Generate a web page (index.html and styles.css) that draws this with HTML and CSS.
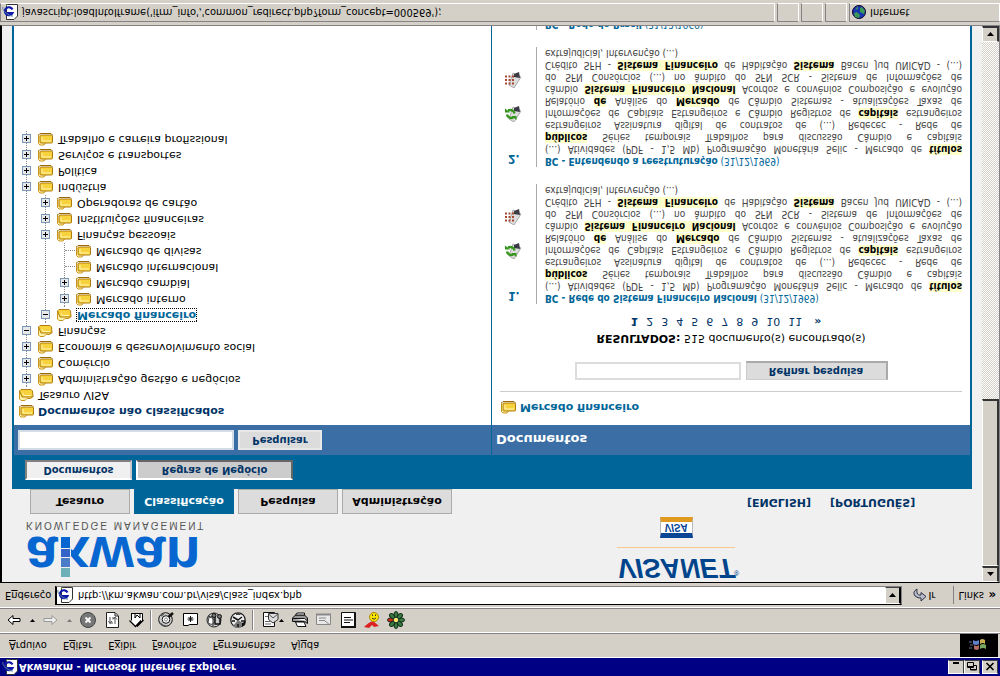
FILE: index.html
```html
<!DOCTYPE html>
<html lang="pt-BR">
<head>
<meta charset="utf-8">
<title>Akwankm - Microsoft Internet Explorer</title>
<link rel="stylesheet" href="styles.css">
</head>
<body>
<svg class="defs" aria-hidden="true">
  <symbol id="folder" viewBox="0 0 16 14">
    <path d="M1.500 11.500V2.500L3 1H7L8.500 3" fill="#fff3a8" stroke="#c9961c"/>
    <path d="M1.500 11L3 12.500H14L15.500 11" fill="none" stroke="#9a6a08"/>
    <rect x="3" y="3" width="12.500" height="8" rx="1" fill="#f7d23c" stroke="#b07c10"/>
    <path d="M5 9V5H14" fill="none" stroke="#fff6b4"/>
  </symbol>
  <symbol id="folder-open" viewBox="0 0 16 14">
    <path d="M1.500 11V3L3 1.500H7L9 3.500H13L14 5" fill="#fff3a8" stroke="#c9961c"/>
    <path d="M1.500 11L4 5H15L14.500 11L13 12.500H3z" fill="#f7d23c" stroke="#b07c10"/>
    <path d="M5 9L6 6.500H13" fill="none" stroke="#fff6b4"/>
  </symbol>
  <symbol id="ie" viewBox="0 0 16 16">
    <path d="M4.500.5H12l3.500 3.500v11.500h-11z" fill="#fff" stroke="#333"/>
    <path d="M4 14l1.500 1.500" stroke="#579028"/>
    <path d="M10.500 10.500A4 4 0 1 1 10.500 7H3" fill="none" stroke="#1018a8" stroke-width="2.200"/>
    <path d="M1 13C-1 10 8 3 11 4" fill="none" stroke="#5580a0"/>
  </symbol>
  <symbol id="down" viewBox="0 0 7 4"><path d="M0 0H7L3.500 4z" fill="#000"/></symbol>
  <symbol id="up" viewBox="0 0 7 4"><path d="M0 4H7L3.500 0z" fill="#000"/></symbol>
  <symbol id="refresh-doc" viewBox="0 0 18 16">
    <path d="M5 3L10 0L17 11L9 15z" fill="#ddd" stroke="#aaa"/>
    <path d="M10 11L16 10L15 16L10 14z" fill="#3a3a44"/>
    <path d="M3 7.500A4 4 0 0 1 9.500 5M10.500 8.500a4 4 0 0 1-6.500 2.500" fill="none" stroke="#35951c" stroke-width="2.400"/>
    <path d="M7.500 6h5V2zM6 9.500H1v4z" fill="#35951c"/>
  </symbol>
  <symbol id="grid-doc" viewBox="0 0 18 16">
    <path d="M5 3L10 0L17 11L9 15z" fill="#ddd" stroke="#aaa"/>
    <path d="M10 11L16 10L15 16L10 14z" fill="#3a3a44"/>
    <path d="M1 4.500H10M1 8H10M1 11.500H10" stroke="#a84630" stroke-width="2" stroke-dasharray="2 1.500"/>
  </symbol>
</svg>
<div class="screen">
  <header class="titlebar">
    <svg class="ic16"><use href="#ie"/></svg>
    <span class="grow">Akwankm - Microsoft Internet Explorer</span>
    <button class="win" aria-label="Minimizar"><svg viewBox="0 0 10 9"><path d="M2 8H8" stroke="#000" stroke-width="2"/></svg></button>
    <button class="win" aria-label="Restaurar"><svg viewBox="0 0 10 9"><path d="M3.500 3V1H9.500V5.500H7M3 1.500H9.500M.5 3.500H6.500V8.500H.5zM.5 4.500H6.500" fill="none" stroke="#000"/></svg></button>
    <button class="win close" aria-label="Fechar"><svg viewBox="0 0 10 9"><path d="M1.500 1L8.500 8M8.500 1L1.500 8" stroke="#000" stroke-width="1.600"/></svg></button>
  </header>

  <div class="menurow">
    <nav class="menu">
      <button><u>A</u>rquivo</button><button>E<u>d</u>itar</button><button>E<u>x</u>ibir</button><button><u>F</u>avoritos</button><button>F<u>e</u>rramentas</button><button>Aj<u>u</u>da</button>
    </nav>
    <div class="throbber"><svg viewBox="0 0 20 18"><path d="M5 5q3-2 5 0v4q-3-2-5 0z" fill="#b06a62"/><path d="M11 5q3 2 6 0v4q-3 2-6 0z" fill="#7aa860"/><path d="M4 10q3-2 6 0v4q-3-2-6 0z" fill="#5f7fc8"/><path d="M11 10q3 2 5 0v4q-3 2-5 0z" fill="#c8ae50"/><path d="M0 6h3M1 9h3M0 12h3" stroke="#68708a"/></svg></div>
  </div>

  <div class="toolbar">
    <button class="tb w24" aria-label="Voltar"><svg viewBox="0 0 18 18"><path d="M3 9L8 4.500V7.500H15V10.500H8V13.500z" fill="#fff" stroke="#000"/></svg></button>
    <button class="tb w12" aria-label="Histórico de voltar"><svg class="caret"><use href="#down"/></svg></button>
    <button class="tb w24" aria-label="Avançar"><svg viewBox="0 0 18 18"><path d="M16 9L11 4.500V7.500H3V10.500H11V13.500z" fill="#eee" stroke="#999"/></svg></button>
    <button class="tb w14" aria-label="Histórico de avançar"><svg class="caret dim"><use href="#down"/></svg></button>
    <button class="tb w24" aria-label="Parar"><svg viewBox="0 0 18 18"><circle cx="9" cy="9" r="7.500" fill="#777" stroke="#444"/><path d="M6.500 6.500l5 5M11.500 6.500l-5 5" stroke="#fff" stroke-width="1.800"/></svg></button>
    <button class="tb w24" aria-label="Atualizar"><svg viewBox="0 0 18 18"><path d="M3.500 1.500H15.500V13L12 16.500H3.500z" fill="#fff" stroke="#222"/><path d="M15 13H12V16" fill="none" stroke="#222"/><path d="M7 12V6H10M5.500 8L7 5.500 9 8M12 5V11H9M10 9.500l2 2.500 2-2.500" fill="none" stroke="#555"/></svg></button>
    <button class="tb w24" aria-label="Página inicial"><svg viewBox="0 0 18 18"><path d="M4.500 8V15.500H15.500V8" fill="#fff" stroke="#000"/><path d="M2.500 8.500L8.500 2.500L14 8.500M10 2.500L16.500 9" fill="#fff" stroke="#000" stroke-width="1.300"/><path d="M4 15.500H13V11L10 14L8 11V15" fill="#fff" stroke="#000"/></svg></button>
    <span class="sep"></span>
    <button class="tb w24" aria-label="Pesquisar"><svg viewBox="0 0 18 18"><circle cx="8.500" cy="9.500" r="6.800" fill="#ccc" stroke="#111"/><path d="M3 6q3-3 6-3M4 13l3 2M12 15l2-2" fill="none" stroke="#555" stroke-width="1.500"/><circle cx="9" cy="9.500" r="3.800" fill="#fff" stroke="#111"/><circle cx="9" cy="9.500" r="1.500" fill="none" stroke="#888"/><path d="M11.500 12L16 16" fill="none" stroke="#111" stroke-width="2.500"/></svg></button>
    <button class="tb w24" aria-label="Favoritos"><svg viewBox="0 0 18 18"><path d="M2.500 3.500H7L8.500 4.500H16.500V15.500H2.500z" fill="#fff" stroke="#000"/><path d="M9.500 7v6M6.500 10h6M7.500 8l4 4M11.500 8l-4 4" stroke="#111"/></svg></button>
    <button class="tb w24" aria-label="Mídia"><svg viewBox="0 0 18 18"><circle cx="9" cy="9" r="7" fill="#ccc" stroke="#222"/><path d="M3 6q5-3 6 1t-5 5z" fill="#fff" stroke="#444"/><path d="M3 13q3-2 5 0M8 3v10" fill="none" stroke="#333"/><path d="M10 13V5H15V12" fill="none" stroke="#111" stroke-width="1.500"/><circle cx="9" cy="13.500" r="2" fill="#777" stroke="#111"/><circle cx="14.500" cy="12.500" r="2" fill="#777" stroke="#111"/></svg></button>
    <button class="tb w24" aria-label="Histórico"><svg viewBox="0 0 18 18"><circle cx="9" cy="9" r="7.200" fill="#eee" stroke="#222" stroke-width="1.300"/><path d="M9 9L4 3A7 7 0 0 1 15 5z" fill="#777"/><path d="M9 9L4 12M9 9L13 12M3 8h3M9 2v3M12 8h4" fill="none" stroke="#111" stroke-width="1.500"/><path d="M7 14L12 14L10 16H7z" fill="#444"/><path d="M13 2v4l4 2-1-4z" fill="#111"/></svg></button>
    <span class="sep"></span>
    <button class="tb w30" aria-label="Correio"><svg viewBox="0 0 18 18"><path d="M2.500 2.500H13.500V16.500H2.500z" fill="#fff" stroke="#111"/><path d="M4 5h6M4 7.500h5M4 12.500h4" stroke="#666"/><path d="M7.500 9.500L12 6L17 9.500V15.500H7.500z" fill="#ddd" stroke="#333"/><path d="M7.500 15L12 11L17 15" fill="none" stroke="#555"/></svg><svg class="caret"><use href="#down"/></svg></button>
    <button class="tb w24" aria-label="Imprimir"><svg viewBox="0 0 18 18"><path d="M6.500 2.500H15L13 7H4.500z" fill="#fff" stroke="#111"/><path d="M1.500 7.500H13.500L16.500 5.500V11L13.500 14H4.500L1.500 11z" fill="#999" stroke="#111"/><path d="M1.500 10.500H13.500L16.500 8M4.500 14L13.500 14V16H6z" fill="#fff" stroke="#111"/></svg></button>
    <button class="tb w24" aria-label="Editar"><svg viewBox="0 0 18 18"><path d="M1.500 4.500H15.500V14.500H1.500z" fill="#e8e8e8" stroke="#888"/><path d="M1 14.500H16" stroke="#888" stroke-width="2"/><path d="M4 11h7M4 8.500h6M10 8l5-4" stroke="#888"/></svg></button>
    <button class="tb w24" aria-label="Discutir"><svg viewBox="0 0 18 18"><path d="M2.500 1.500H16.500V16.500H2.500z" fill="#fff" stroke="#111"/><path d="M2 2H17M16 2V16" stroke="#111" stroke-width="2"/><path d="M5 6.500h6M5 9h9M5 11.500h7" stroke="#111"/></svg></button>
    <button class="tb w24" aria-label="Messenger"><svg viewBox="0 0 18 18"><path d="M1 2q5 5 9 6l6-5-5-1-2 2-3-3z" fill="#d22"/><circle cx="11" cy="12" r="4.500" fill="#ffe600" stroke="#a80"/><path d="M9 11q2-2.500 4 0M9.500 13v1.500M12.500 13v1.500" fill="none" stroke="#333"/></svg></button>
    <button class="tb w24" aria-label="ICQ"><svg viewBox="0 0 18 18"><g fill="#397a45" stroke="#122e18"><ellipse cx="9" cy="3.500" rx="2" ry="3"/><ellipse cx="9" cy="3.500" rx="2" ry="3" transform="rotate(45 9 9)"/><ellipse cx="9" cy="3.500" rx="2" ry="3" transform="rotate(90 9 9)"/><ellipse cx="9" cy="3.500" rx="2" ry="3" transform="rotate(135 9 9)"/><ellipse cx="9" cy="3.500" rx="2" ry="3" transform="rotate(180 9 9)"/><ellipse cx="9" cy="3.500" rx="2" ry="3" transform="rotate(225 9 9)"/><ellipse cx="9" cy="3.500" rx="2" ry="3" transform="rotate(270 9 9)" fill="#d42a1a"/><ellipse cx="9" cy="3.500" rx="2" ry="3" transform="rotate(315 9 9)"/></g><circle cx="9" cy="9" r="2" fill="#ffe95a"/></svg></button>
  </div>

  <div class="address">
    <label for="url">E<u>n</u>dereço</label>
    <div class="combo">
      <svg class="ic16"><use href="#ie"/></svg>
      <input id="url" type="text" value="http://km.akwan.com.br/visa/class_index.php">
      <button class="drop" aria-label="Mostrar endereços"><svg class="caret"><use href="#down"/></svg></button>
    </div>
    <button class="go"><svg viewBox="0 0 14 14"><path d="M4 13Q-1 10 2 6Q5 3.500 8 4V1L13 5.500L8 9.500V7Q3 6 4 13z" fill="#b4bccc" stroke="#334"/></svg>Ir</button>
    <span class="links">Links</span><span class="more">»</span>
  </div>

  <div class="viewport">
    <main class="page">
      <div class="top">
        <div class="brand">
          <div class="akwan">akwan
            <svg viewBox="0 0 11 43"><rect width="11" height="43" fill="#f0f0f0"/><rect x="1" y="3" width="9" height="9" fill="#6eb0b8"/><rect x="1" y="13" width="9" height="9" fill="#4a7cc8"/><rect x="1" y="23" width="9" height="8" fill="#3563c8"/><rect x="1" y="32" width="9" height="11" fill="#0866d0"/></svg>
          </div>
          <div class="km">KNOWLEDGE MANAGEMENT</div>
          <nav class="tabs"><a href="#">Tesauro</a><a href="#" class="on">Classificação</a><a href="#">Pesquisa</a><a href="#" class="wide">Administração</a></nav>
        </div>
        <div class="visanet">
          <div class="vn">VISANET<sup>®</sup></div>
          <div class="card">VISA</div>
        </div>
        <nav class="lang"><a href="#">[ENGLISH]</a><a href="#">[PORTUGUÊS]</a></nav>
      </div>

      <div class="frame">
        <div class="subtabs"><button class="s1">Documentos</button><button class="s2">Regras de Negócio</button></div>
        <div class="cols">
          <section class="left">
            <form class="band"><input type="text" aria-label="Pesquisar conceito"><button type="button">Pesquisar</button></form>
            <div class="treebox">
              <a class="row strong" href="#"><svg class="fo"><use href="#folder"/></svg>Documentos não classificados</a>
              <a class="row" href="#"><svg class="fo"><use href="#folder-open"/></svg>Tesauro VISA</a>
              <ul class="tree">
                <li><div class="row"><button class="tg plus" aria-label="Expandir"></button><svg class="fo"><use href="#folder"/></svg><a href="#">Administração gestão e negócios</a></div></li>
                <li><div class="row"><button class="tg plus" aria-label="Expandir"></button><svg class="fo"><use href="#folder"/></svg><a href="#">Comércio</a></div></li>
                <li><div class="row"><button class="tg plus" aria-label="Expandir"></button><svg class="fo"><use href="#folder"/></svg><a href="#">Economia e desenvolvimento social</a></div></li>
                <li><div class="row"><button class="tg" aria-label="Recolher"></button><svg class="fo"><use href="#folder-open"/></svg><a href="#">Finanças</a></div>
                  <ul>
                    <li><div class="row"><button class="tg" aria-label="Recolher"></button><svg class="fo"><use href="#folder-open"/></svg><a href="#" class="sel">Mercado financeiro</a></div>
                      <ul>
                        <li><div class="row"><button class="tg plus" aria-label="Expandir"></button><svg class="fo"><use href="#folder"/></svg><a href="#">Mercado interno</a></div></li>
                        <li><div class="row"><button class="tg plus" aria-label="Expandir"></button><svg class="fo"><use href="#folder"/></svg><a href="#">Mercado cambial</a></div></li>
                        <li><div class="row"><span class="leaf"></span><svg class="fo"><use href="#folder"/></svg><a href="#">Mercado internacional</a></div></li>
                        <li><div class="row"><span class="leaf"></span><svg class="fo"><use href="#folder"/></svg><a href="#">Mercado de divisas</a></div></li>
                      </ul></li>
                    <li><div class="row"><button class="tg plus" aria-label="Expandir"></button><svg class="fo"><use href="#folder"/></svg><a href="#">Finanças pessoais</a></div></li>
                    <li><div class="row"><button class="tg plus" aria-label="Expandir"></button><svg class="fo"><use href="#folder"/></svg><a href="#">Instituições financeiras</a></div></li>
                    <li><div class="row"><button class="tg plus" aria-label="Expandir"></button><svg class="fo"><use href="#folder"/></svg><a href="#">Operadoras de cartão</a></div></li>
                  </ul></li>
                <li><div class="row"><button class="tg plus" aria-label="Expandir"></button><svg class="fo"><use href="#folder"/></svg><a href="#">Indústria</a></div></li>
                <li><div class="row"><button class="tg plus" aria-label="Expandir"></button><svg class="fo"><use href="#folder"/></svg><a href="#">Política</a></div></li>
                <li><div class="row"><button class="tg plus" aria-label="Expandir"></button><svg class="fo"><use href="#folder"/></svg><a href="#">Serviços e transportes</a></div></li>
                <li><div class="row"><button class="tg plus" aria-label="Expandir"></button><svg class="fo"><use href="#folder"/></svg><a href="#">Trabalho e carreira profissional</a></div></li>
              </ul>
            </div>
          </section>

          <section class="right">
            <h2 class="band">Documentos</h2>
            <div class="docs">
              <h3><svg class="fo"><use href="#folder"/></svg>Mercado financeiro</h3>
              <form class="refine"><input type="text" aria-label="Refinar pesquisa"><button type="button">Refinar pesquisa</button></form>
              <p class="count"><b>RESULTADOS:</b> 515 documento(s) encontrado(s)</p>
              <nav class="pager"><b>1</b><a href="#">2</a><a href="#">3</a><a href="#">4</a><a href="#">5</a><a href="#">6</a><a href="#">7</a><a href="#">8</a><a href="#">9</a><a href="#">10</a><a href="#">11</a><a href="#" class="next">»</a></nav>

              <article class="hit">
                <div class="side"><span class="num">1.</span><svg><use href="#refresh-doc"/></svg><svg><use href="#grid-doc"/></svg></div>
                <div class="text">
                  <a href="#"><b>BC - Rede do Sistema Financeiro Nacional</b> (31/12/1969)</a>
                  <p class="just">(...) Atividades (PDF - 1,5 Mb) Programação Monetária Selic - Mercado de <mark>títulos</mark><br><mark>públicos</mark> Séries temporais Trabalhos para discussão Câmbio e capitais<br>estrangeiros Assinatura digital de contratos de (...) Redecec - Rede de<br>Informações de Capitais Estrangeiros e Câmbio Registros de <mark>capitais</mark> estrangeiros<br>Relatório <mark>de</mark> Análise do <mark>Mercado</mark> de Câmbio Sistemas - atualizações Taxas de<br>câmbio <mark>Sistema Financeiro Nacional</mark> Acordos e convênios Composição e evolução<br>do SFN Consórcios (...) no âmbito do SFN SCR - Sistema de Informações de<br>Crédito SFH - <mark>Sistema Financeiro</mark> de Habitação <mark>Sistema</mark> Bacen Jud UNICAD - (...)</p>
                  <p>extrajudicial, Intervenção (...)</p>
                </div>
              </article>
              <article class="hit">
                <div class="side"><span class="num">2.</span><svg><use href="#refresh-doc"/></svg><svg><use href="#grid-doc"/></svg></div>
                <div class="text">
                  <a href="#"><b>BC - Entendendo a reestruturação</b> (31/12/1969)</a>
                  <p class="just">(...) Atividades (PDF - 1,5 Mb) Programação Monetária Selic - Mercado de <mark>títulos</mark><br><mark>públicos</mark> Séries temporais Trabalhos para discussão Câmbio e capitais<br>estrangeiros Assinatura digital de contratos de (...) Redecec - Rede de<br>Informações de Capitais Estrangeiros e Câmbio Registros de <mark>capitais</mark> estrangeiros<br>Relatório <mark>de</mark> Análise do <mark>Mercado</mark> de Câmbio Sistemas - atualizações Taxas de<br>câmbio <mark>Sistema Financeiro Nacional</mark> Acordos e convênios Composição e evolução<br>do SFN Consórcios (...) no âmbito do SFN SCR - Sistema de Informações de<br>Crédito SFH - <mark>Sistema Financeiro</mark> de Habitação <mark>Sistema</mark> Bacen Jud UNICAD - (...)</p>
                  <p>extrajudicial, Intervenção (...)</p>
                </div>
              </article>
              <article class="hit">
                <div class="side"></div>
                <div class="text"><a href="#"><b>BC - Rede do Brasil</b> (31/12/1969)</a></div>
              </article>
            </div>
          </section>
        </div>
      </div>
    </main>
    <div class="scroll">
      <button aria-label="Rolar para cima"><svg class="caret"><use href="#up"/></svg></button>
      <div class="thumb"></div>
      <div class="track"></div>
      <button aria-label="Rolar para baixo"><svg class="caret"><use href="#down"/></svg></button>
    </div>
  </div>

  <footer class="status">
    <div class="pane grow"><svg class="ic16"><use href="#ie"/></svg>javascript:loadIntoIframe('ifrm_info','common_redirect.php?form_concept=000569');</div>
    <div class="pane small"></div><div class="pane small"></div><div class="pane small"></div>
    <div class="pane zone"><svg viewBox="0 0 14 14"><circle cx="7" cy="7" r="6.500" fill="#1834b0" stroke="#102"/><path d="M3 2l4-1 1 3-3 3-3-1zM8 7l4-2 1 3-3 4-2-1zM3 9l3 1v3z" fill="#3c9a58"/></svg>Internet</div>
  </footer>
</div>
</body>
</html>
```

FILE: styles.css
```css
* { box-sizing: border-box; }
html, body { height: 100%; margin: 0; overflow: hidden; }
body { font: 11px/14px "DejaVu Sans", Verdana, sans-serif; color: #000; background: #d4d0c8; }
button, input { font: inherit; color: inherit; margin: 0; padding: 0; border: 0; background: none; border-radius: 0; }
a { color: inherit; text-decoration: none; }
ul, p, h2, h3 { margin: 0; padding: 0; list-style: none; font: inherit; }
.defs { position: absolute; width: 0; height: 0; }
.grow { flex: 1; }
.ic16 { width: 16px; height: 16px; flex: none; }
.caret { width: 7px; height: 4px; flex: none; }
.dim { opacity: .4; }

/* The whole window is mirrored top to bottom. */
.screen { height: 100vh; display: flex; flex-direction: column; transform: scaleY(-1); background: #d4d0c8; }

.titlebar, .menurow, .toolbar, .address, .status { font-family: "DejaVu Sans Condensed", Tahoma, sans-serif; flex: none; display: flex; align-items: center; }
.titlebar { height: 18px; background: #000084; color: #fff; font-weight: bold; padding: 0 2px; }
.titlebar .grow { padding-left: 1px; }
.win { width: 16px; height: 14px; background: #d4d0c8; border: 1px solid #fff; border-right-color: #404040; border-bottom-color: #404040; display: flex; align-items: center; justify-content: center; }
.win svg { width: 10px; height: 9px; }
.close { margin-left: 2px; }

.menurow { height: 25px; border-top: 1px solid #fff; border-bottom: 1px solid #848284; padding-right: 2px; }
.menu { flex: 1; display: flex; gap: 16px; padding-left: 9px; }
.throbber { width: 38px; height: 23px; background: #000; display: flex; align-items: center; justify-content: center; }
.throbber svg { width: 20px; height: 18px; }

.toolbar { height: 25px; border-top: 1px solid #fff; border-bottom: 1px solid #848284; padding-left: 2px; }
.tb { display: flex; align-items: center; justify-content: center; height: 22px; }
.tb svg { width: 18px; height: 18px; flex: none; }
.tb svg.caret { width: 5px; height: 3px; }
.w12 { width: 12px; }
.w14 { width: 14px; }
.w24 { width: 24px; }
.w30 { width: 32px; }
.sep { width: 2px; height: 20px; margin: 0 2px; border-left: 1px solid #848284; border-right: 1px solid #fff; }

.address { height: 25px; border-top: 1px solid #fff; padding: 2px 4px 3px 5px; }
.address label { width: 50px; }
.combo { flex: 1; align-self: stretch; display: flex; align-items: center; background: #fff; border: 1px solid #848284; border-top-color: #000; border-left: 2px solid #000; }
.combo input { flex: 1; align-self: stretch; padding-left: 5px; outline: 0; }
.drop { width: 16px; align-self: stretch; background: #d4d0c8; border: 1px solid #fff; border-right: 2px solid #000; border-bottom-color: #404040; display: flex; align-items: center; justify-content: center; }
.go { width: 51px; padding-left: 11px; display: flex; align-items: center; gap: 1px; }
.go svg { width: 14px; height: 14px; }
.links { border-left: 1px solid #848284; padding-left: 4px; width: 35px; line-height: 18px; }
.more { font-weight: bold; font-size: 13px; }

.viewport { flex: 1; min-height: 0; display: flex; border: 1px solid #848284; border-top-color: #000; border-left: 2px solid #000; background: #f0f0f0; }
.page { flex: 1; min-width: 0; overflow: hidden; padding: 0 10px; display: flex; flex-direction: column; }
.top { flex: none; height: 93px; display: flex; }
.brand { flex: 1; padding-left: 14px; display: flex; flex-direction: column; }
.akwan { position: relative; height: 50px; font: bold 57px/50px "Liberation Sans", Arial, sans-serif; color: #0866d0; white-space: nowrap; }
/* The stem of the k is drawn as a column of coloured squares. */
.akwan svg { position: absolute; left: 34px; top: 2px; width: 11px; height: 43px; }
.km { font: 10px/13px "Liberation Sans", Arial, sans-serif; color: #555; height: 18px; letter-spacing: 2px; }
.tabs { display: flex; gap: 4px; padding-left: 4px; }
.tabs a { width: 100px; height: 25px; border: 1px solid #aaa; background: #dcdcdc; font-weight: bold; text-align: center; line-height: 23px; }
.tabs .on { background: #006699; border-color: #006699; color: #fff; }
.tabs .wide { width: 110px; }
.visanet { width: 118px; flex: none; text-align: center; }
.vn { font: italic bold 27px/28px "Liberation Sans", Arial, sans-serif; color: #00458c; padding-bottom: 6px; border-bottom: 1px solid #f7c98a; white-space: nowrap; display: flex; }
.vn sup { font: 7px/20px "Liberation Sans", Arial, sans-serif; }
.card { width: 33px; height: 21px; margin: 9px auto 0; border: 1px solid #bbb; border-top: 5px solid #0a4595; border-bottom: 5px solid #e09a20; background: #fff; font: italic bold 10px/11px "Liberation Sans", Arial, sans-serif; color: #0a4595; }
.lang { width: 237px; flex: none; display: flex; gap: 19px; padding: 73px 0 0 12px; color: #003366; font-weight: bold; white-space: nowrap; }

.frame { flex: 1; min-height: 0; display: flex; flex-direction: column; border: solid #006699; border-width: 0 2px; background: #fff; }
.subtabs { flex: none; height: 34px; background: #006699; display: flex; gap: 4px; padding: 9px 0 0 11px; }
.subtabs button, .band button, .refine button { font-weight: bold; font-size: 10px; line-height: 16px; color: #003366; }
.subtabs button { height: 20px; border: 2px solid; }
.subtabs .s1 { width: 107px; background: #f0f0f0; border-color: #fff #ccc #808080 #808080; }
.subtabs .s2 { width: 157px; background: #ccc; border-color: #fff #666 #666 #fff; }
.cols { flex: 1; min-height: 0; display: grid; grid-template-columns: 1fr 1fr; }
.left { border-right: 1px solid #006699; min-width: 0; }
.right { min-width: 0; }
.band { height: 30px; background: #3a6ea5; display: flex; gap: 4px; padding: 5px 4px; }
.band input { width: 216px; height: 20px; background: #fff; border: 2px solid #d4dce8; }
.band button { width: 84px; height: 20px; background: #dcdcdc; border: 2px solid #e8e8e8; }
h2.band { color: #fff; font-size: 13px; font-weight: bold; line-height: 16px; padding-top: 8px; }

.treebox { padding: 6px 4px; }
.row { display: flex; align-items: center; height: 16px; white-space: nowrap; }
.fo { width: 16px; height: 14px; flex: none; margin-right: 4px; }
.strong { color: #003366; font-weight: bold; }
.tree, .tree ul { margin-left: 8px; border-left: 1px dotted #888; }
.tree ul { margin-left: 18px; }
.tree .row { margin-left: -5px; }
.tree .fo { margin-right: 5px; }
.tg { width: 9px; height: 9px; flex: none; margin-right: 6px; border: 1px solid #7898b5; background: linear-gradient(#000, #000) center / 5px 1px no-repeat, #e8e8e8; }
.plus { background: linear-gradient(#000, #000) center / 5px 1px no-repeat, linear-gradient(#000, #000) center / 1px 5px no-repeat, #e8e8e8; }
.leaf { width: 10px; margin: 0 0 0 5px; border-top: 1px dotted #888; }
.sel { color: #006699; font-weight: bold; outline: 1px dotted #000; line-height: 12px; }

.docs { padding: 10px 8px 0; }
.docs h3 { display: flex; align-items: center; height: 24px; padding-bottom: 8px; border-bottom: 1px solid #ccc; color: #006699; font-weight: bold; }
.refine { display: flex; justify-content: center; gap: 5px; padding-top: 11px; }
.refine input { width: 166px; height: 18px; border: 2px solid #dcdcdc; }
.refine button { width: 142px; height: 19px; background: #dcdcdc; border: 1px solid #ccc; border-right: 2px solid #aaa; border-bottom: 2px solid #aaa; }
.count { text-align: center; padding-top: 14px; line-height: 18px; }
.pager { display: flex; justify-content: center; gap: 8px; color: #003366; line-height: 14px; padding: 1px 10px 10px 0; }
.next { margin-left: 4px; font-weight: bold; }

.hit { display: flex; margin-bottom: 17px; font: 10px/12px "DejaVu Sans Condensed", Tahoma, sans-serif; }
.side { width: 36px; flex: none; padding-left: 4px; color: #006699; display: flex; flex-direction: column; }
.side .num { font-weight: bold; font-size: 12px; line-height: 16px; padding-left: 4px; margin-bottom: 29px; }
.side svg { width: 18px; height: 16px; margin-bottom: 18px; }
.side svg:last-child { margin: 0; }
.text { flex: 1; min-width: 0; border-left: 1px solid #aaa; padding-left: 8px; color: #444; white-space: nowrap; }
.text a { color: #006699; display: block; }
.just { text-align: justify; text-align-last: justify; white-space: normal; }
mark { background: #ffffcc; color: #000; font-weight: bold; }

.scroll { width: 17px; flex: none; display: flex; flex-direction: column; background: repeating-conic-gradient(#fff 0 25%, #d4d0c8 0 50%) 0 0 / 2px 2px; }
.scroll button, .thumb { background: #d4d0c8; border: 1px solid #fff; border-right: 2px solid #333; border-bottom: 2px solid #333; flex: none; }
.scroll button { height: 16px; display: flex; align-items: center; justify-content: center; }
.thumb { height: 167px; }
.track { flex: 1; }

.status { height: 25px; gap: 2px; padding: 3px 0; }
.pane { height: 19px; display: flex; align-items: center; gap: 4px; border: 1px solid #848284; border-right-color: #fff; border-bottom-color: #fff; white-space: nowrap; min-width: 0; }
.pane.grow { padding-left: 1px; }
.small { width: 22px; }
.zone { width: 151px; padding-left: 2px; }
.zone svg { width: 14px; height: 14px; }
```
